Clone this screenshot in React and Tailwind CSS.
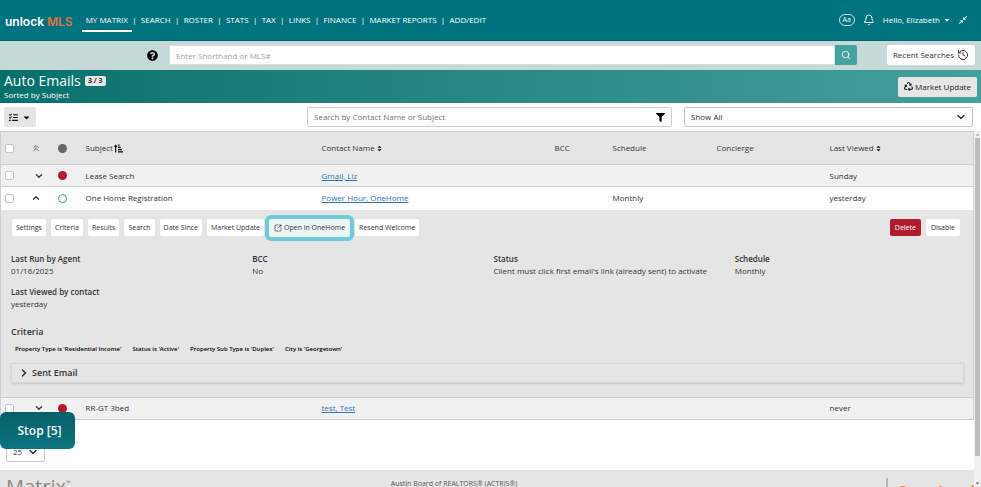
import { Fragment } from "react";
import { FaListCheck } from "react-icons/fa6";
import {
  FaCaretDown,
  FaFilter,
  FaQuestionCircle,
  FaRecycle,
  FaSort,
  FaSortAmountUpAlt,
} from "react-icons/fa";
import {
  Bell,
  ChevronDown,
  ChevronRight,
  ChevronUp,
  ChevronsUp,
  History,
  Search,
  SquareArrowOutUpRight,
} from "lucide-react";

const navItems = [
  "MY MATRIX",
  "SEARCH",
  "ROSTER",
  "STATS",
  "TAX",
  "LINKS",
  "FINANCE",
  "MARKET REPORTS",
  "ADD/EDIT",
];

const emails = [
  { id: 1, subject: "Lease Search", contact: "Gmail, Liz", schedule: "", viewed: "Sunday", active: false },
  { id: 2, subject: "One Home Registration", contact: "Power Hour, OneHome", schedule: "Monthly", viewed: "yesterday", active: true },
  { id: 3, subject: "RR-GT 3bed", contact: "test, Test", schedule: "", viewed: "never", active: false },
];

const actions = ["Settings", "Criteria", "Results", "Search", "Date Since", "Market Update"];

const criteria = [
  "Property Type is 'Residential Income'",
  "Status is 'Active'",
  "Property Sub Type is 'Duplex'",
  "City is 'Georgetown'",
];

function CompressIcon() {
  return (
    <svg viewBox="0 0 16 16" className="size-2" fill="currentColor" aria-hidden="true">
      <path d="M14.500 0L16 1.500 12 5.500 14 7.500H8.500V2L10.500 4z" />
      <path d="M1.500 16L0 14.500 4 10.500 2 8.500h5.500V14L5.500 12z" />
    </svg>
  );
}

function Navbar() {
  return (
    <header className="flex h-[41px] shrink-0 items-center border-b border-[#00656f] bg-[#00747e] pr-[14px] pl-[5px] text-white">
      <a href="#" className="mt-1 font-[Inter] text-[12px] leading-4 font-semibold whitespace-nowrap">
        unlock <span className="text-[#e2713f]">MLS</span>
      </a>

      <nav className="ml-[9px] flex items-center whitespace-nowrap">
        {navItems.map((item, i) => (
          <Fragment key={item}>
            {i > 0 && <span className="w-[5px] text-center leading-5">|</span>}
            <a
              href="#"
              className={
                i === 0
                  ? "border-b-2 border-white px-1 pt-[2px] leading-5"
                  : "border-b-2 border-transparent px-1 pt-[2px] leading-5"
              }
            >
              {item}
            </a>
          </Fragment>
        ))}
      </nav>

      <div className="ml-auto flex items-center gap-2 whitespace-nowrap">
        <button aria-label="Text size" className="h-3 w-4 rounded-full border border-white/80 text-[7px] leading-[10px]">
          Aa
        </button>
        <button aria-label="Notifications">
          <Bell className="size-3" strokeWidth={2} />
        </button>
        <button className="flex items-center gap-[3px]">
          Hello, Elizabeth
          <FaCaretDown className="size-2" />
        </button>
        <button aria-label="Compress">
          <CompressIcon />
        </button>
      </div>
    </header>
  );
}

function SearchBar() {
  return (
    <div className="flex h-[29px] shrink-0 items-center bg-[#c4d9d8] pr-[6px] pb-[1px] pl-[147px]">
      <button aria-label="Help">
        <FaQuestionCircle className="size-[11px] text-black" />
      </button>
      <input
        type="text"
        aria-label="Quick search"
        placeholder="Enter Shorthand or MLS#"
        className="ml-[11px] h-5 min-w-0 flex-1 border border-[#d5dfdf] bg-white px-[6px] placeholder:text-[#a4a4a4]"
      />
      <button aria-label="Search" className="flex h-5 w-[22px] items-center justify-center rounded-r-xs bg-[#45a29f] text-white">
        <Search className="size-[10px]" strokeWidth={2} />
      </button>
      <button className="ml-[30px] flex h-5 w-[88px] items-center justify-center gap-[3px] rounded-xs bg-white whitespace-nowrap">
        Recent Searches
        <History className="size-3" strokeWidth={2} />
      </button>
    </div>
  );
}

function TitleBar() {
  return (
    <div className="flex h-[33px] shrink-0 items-center justify-between bg-linear-to-r from-[#04706c] to-[#43a09d] pr-1 pl-1 text-white">
      <div className="pb-[2px]">
        <div className="flex items-center gap-1">
          <h1 className="text-[14px] leading-[18px] font-medium">Auto Emails</h1>
          <span className="w-[21px] rounded-xs bg-[#e6e6e6] text-center text-[7px] leading-[10px] font-bold text-[#333]">
            3 / 3
          </span>
        </div>
        <p className="leading-[10px]">Sorted by Subject</p>
      </div>
      <button className="flex h-5 w-[79px] items-center justify-center gap-[2px] rounded-xs bg-[#e6e6e6] whitespace-nowrap text-[#222]">
        <FaRecycle className="size-[9px]" />
        Market Update
      </button>
    </div>
  );
}

function Toolbar() {
  return (
    <div className="flex h-7 shrink-0 items-center pr-2 pl-1">
      <button aria-label="List view" className="flex h-5 w-8 items-center justify-center gap-1 rounded-xs bg-[#e5e5e5]">
        <FaListCheck className="size-[9px] text-black" />
        <FaCaretDown className="size-[9px] text-black" />
      </button>
      <div className="ml-auto flex h-5 w-[365px] items-center rounded-xs border border-[#cfcfcf] px-[6px]">
        <input
          type="text"
          aria-label="Search by Contact Name or Subject"
          placeholder="Search by Contact Name or Subject"
          className="min-w-0 flex-1 placeholder:text-[#737373]"
        />
        <FaFilter className="size-[9px] text-black" />
      </div>
      <div className="ml-3 grid w-[289px] items-center">
        <select aria-label="Filter" className="col-start-1 row-start-1 h-5 appearance-none rounded-xs border border-[#c4c4c4] px-[6px]">
          <option>Show All</option>
        </select>
        <ChevronDown strokeWidth={3} className="pointer-events-none col-start-1 row-start-1 mr-[6px] size-3 justify-self-end" />
      </div>
    </div>
  );
}

function EmailRow({ email }) {
  return (
    <tr className={email.active ? "h-[23px] bg-white" : "h-[22px] border-b border-[#cfcfcf] bg-[#f1f1f1]"}>
      <td className="pl-1">
        <input
          type="checkbox"
          aria-label={email.subject}
          className="block size-[9px] appearance-none rounded-xs border border-[#c4c4c4] bg-white"
        />
      </td>
      <td>
        <button
          aria-label={email.active ? "Collapse" : "Expand"}
          className={email.active ? "ml-2 block" : "ml-[11px] block"}
        >
          {email.active ? (
            <ChevronUp strokeWidth={3} className="size-[10px]" />
          ) : (
            <ChevronDown strokeWidth={3} className="size-[10px]" />
          )}
        </button>
      </td>
      <td>
        <span
          className={
            email.active
              ? "ml-[5px] block size-[9px] rounded-full border border-[#4f8f80]"
              : "ml-[5px] block size-[9px] rounded-full bg-[#b01c2e]"
          }
        />
      </td>
      <td>{email.subject}</td>
      <td>
        <a href="#" className="text-[#2f74b5] underline">
          {email.contact}
        </a>
      </td>
      <td />
      <td>{email.schedule}</td>
      <td />
      <td>{email.viewed}</td>
    </tr>
  );
}

function Field({ label, children }) {
  return (
    <div>
      <dt className="leading-3 font-semibold">{label}</dt>
      <dd className="leading-3">{children}</dd>
    </div>
  );
}

function EmailDetails() {
  return (
    <div className="h-[187px] pt-[5px] pr-[9px] pl-[10px]">
      <div className="flex items-center gap-[5px] pl-[1px] text-[7px] whitespace-nowrap">
        {actions.map((action) => (
          <button key={action} className="h-[17px] rounded-xs bg-white px-1">
            {action}
          </button>
        ))}
        <button className="-mx-1 flex h-[26px] items-center gap-[2px] rounded-md border-4 border-[#70cbd8] bg-[#edf6f6] px-[5px]">
          <SquareArrowOutUpRight className="size-2" />
          Open in OneHome
        </button>
        <button className="h-[17px] rounded-xs bg-white px-1">Resend Welcome</button>
        <button className="ml-auto h-[17px] rounded-xs bg-[#b01c2e] px-[5px] text-white">Delete</button>
        <button className="mr-1 h-[17px] rounded-xs bg-white px-[5px]">Disable</button>
      </div>

      <dl className="-mr-3 mt-3 grid grid-cols-4 gap-y-[9px]">
        <Field label="Last Run by Agent">01/16/2025</Field>
        <Field label="BCC">No</Field>
        <Field label="Status">
          <span className="whitespace-nowrap">Client must click first email's link (already sent) to activate</span>
        </Field>
        <Field label="Schedule">Monthly</Field>
        <Field label="Last Viewed by contact">yesterday</Field>
      </dl>

      <h2 className="mt-4 text-[9px] leading-3 font-semibold">Criteria</h2>
      <ul className="mt-[6px] flex gap-[11px] pl-1 text-[6px] leading-[10px] font-semibold whitespace-nowrap text-black">
        {criteria.map((item) => (
          <li key={item}>{item}</li>
        ))}
      </ul>

      <button className="mt-[9px] flex h-5 w-full items-center gap-[2px] border border-[#d6d6d6] px-[6px] text-[9px] font-semibold shadow-sm">
        <ChevronRight strokeWidth={3} className="size-3" />
        Sent Email
      </button>
    </div>
  );
}

function EmailTable() {
  return (
    <table className="w-full table-fixed border-collapse border border-[#cfcfcf] text-left whitespace-nowrap">
      <colgroup>
        <col className="w-[22px]" />
        <col className="w-[30px]" />
        <col className="w-[33px]" />
        <col />
        <col className="w-[233px]" />
        <col className="w-[58px]" />
        <col className="w-[104px]" />
        <col className="w-[113px]" />
        <col className="w-[144px]" />
      </colgroup>
      <thead>
        <tr className="h-[33px] border-b border-[#cfcfcf] bg-[#e5e5e5]">
          <th className="pl-1">
            <input
              type="checkbox"
              aria-label="Select all"
              className="block size-[9px] appearance-none rounded-xs border border-[#c4c4c4] bg-white"
            />
          </th>
          <th>
            <button aria-label="Collapse all" className="ml-2 block">
              <ChevronsUp strokeWidth={2} className="size-[10px]" />
            </button>
          </th>
          <th>
            <span className="ml-[5px] block size-[9px] rounded-full bg-[#666]" />
          </th>
          <th className="font-medium">
            <button className="flex items-center gap-[1px]">
              Subject <FaSortAmountUpAlt className="size-[9px] text-black" />
            </button>
          </th>
          <th className="font-medium">
            <button className="flex items-center gap-[1px]">
              Contact Name <FaSort className="size-[7px]" />
            </button>
          </th>
          <th className="font-medium">BCC</th>
          <th className="font-medium">Schedule</th>
          <th className="font-medium">Concierge</th>
          <th className="font-medium">
            <button className="flex items-center gap-[1px]">
              Last Viewed <FaSort className="size-[7px]" />
            </button>
          </th>
        </tr>
      </thead>
      <tbody>
        {emails.map((email) => (
          <Fragment key={email.id}>
            <EmailRow email={email} />
            {email.active && (
              <tr className="border-b border-[#cfcfcf] bg-[#e5e5e5]">
                <td colSpan={9} className="align-top">
                  <EmailDetails />
                </td>
              </tr>
            )}
          </Fragment>
        ))}
      </tbody>
    </table>
  );
}

function Footer() {
  return (
    <footer className="mt-2 flex h-16 items-start bg-[#e5e5e5] px-[6px] pt-2 text-[#555]">
      <div className="flex w-2/5 items-start pt-[1px] font-[Open_Sans] text-[20px] leading-4 font-medium text-[#8e8983]">
        Matrix<span className="text-[6px] leading-2">™</span>
      </div>
      <p className="pt-[1px] text-[7px] leading-[10px]">Austin Board of REALTORS® (ACTRIS®)</p>
      <div className="ml-auto h-10 w-[82px] border-l-2 border-[#bbb4ae] pt-[5px] pl-2 font-[Inter] text-[18px] leading-5 font-bold text-[#e9936e]">
        CoreLogic
      </div>
    </footer>
  );
}

function Scrollbar() {
  return (
    <div className="flex w-[7px] shrink-0 flex-col items-center bg-[#f1f1f1]" aria-hidden="true">
      <svg viewBox="0 0 7 7" className="size-[7px] shrink-0 fill-[#999]">
        <path d="M3.500 2.500L5 4.500H2z" />
      </svg>
      <div className="h-[318px] w-[5px] bg-[#bdbdbd]" />
      <svg viewBox="0 0 7 7" className="mt-auto size-[7px] shrink-0 fill-[#444]">
        <path d="M3.500 4.500L5 2.500H2z" />
      </svg>
    </div>
  );
}

export default function App() {
  return (
    <div className="relative flex h-screen flex-col overflow-hidden bg-white font-['Open_Sans',sans-serif] text-[8px] leading-3 text-[#333]">
      <Navbar />
      <SearchBar />
      <TitleBar />
      <Toolbar />

      <div className="flex min-h-0 flex-1">
        <main className="min-w-0 flex-1 overflow-hidden">
          <EmailTable />
          <div className="mt-[22px] ml-[6px] grid w-[39px] items-center">
            <select aria-label="Rows per page" className="col-start-1 row-start-1 h-5 appearance-none rounded-xs border border-[#c9c9c9] px-[6px]">
              <option>25</option>
            </select>
            <ChevronDown strokeWidth={3} className="pointer-events-none col-start-1 row-start-1 mr-[6px] size-3 justify-self-end" />
          </div>
          <Footer />
        </main>
        <Scrollbar />
      </div>

      {/* floating button sits on top of the list */}
      <button className="absolute bottom-[38px] left-0 h-[37px] w-[75px] rounded-md bg-linear-to-b from-[#056069] to-[#0c7480] pl-1 text-[12px] font-semibold text-white">
        Stop [5]
      </button>
    </div>
  );
}
